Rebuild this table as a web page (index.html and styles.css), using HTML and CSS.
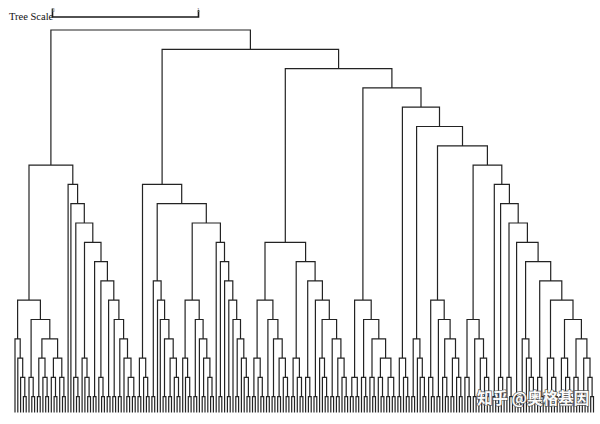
FILE: index.html
```html
<!DOCTYPE html>
<html lang="zh">
<head>
<meta charset="utf-8">
<title>Tree</title>
<link rel="stylesheet" href="styles.css">
</head>
<body>
<div class="figure">
  <svg id="tree" class="tree" width="600" height="424" viewBox="0 0 600 424" xmlns="http://www.w3.org/2000/svg">
    <g class="scale">
      <text class="scale-title" x="9" y="20">Tree Scale</text>
      <path class="scale-bar" d="M52.5 8.5 V17 H198.5 V10"/>
      <text class="scale-tick" x="52" y="11.5">0</text>
      <text class="scale-tick" x="197" y="11.5">1</text>
    </g>
    <g id="branches" class="branches"></g>
    <text class="watermark" x="477" y="404">知乎 @奥格基因</text>
  </svg>
</div>
<script src="script.js"></script>
</body>
</html>
```

FILE: styles.css
```css
html, body {
  margin: 0;
  padding: 0;
  background: #ffffff;
}

.figure {
  width: 600px;
  height: 424px;
  overflow: hidden;
}

.tree {
  display: block;
}

.scale-title {
  font-family: "Liberation Serif", "DejaVu Serif", serif;
  font-size: 10.5px;
  fill: #111;
}

.scale-tick {
  font-family: "Liberation Sans", sans-serif;
  font-size: 5px;
  fill: #777;
}

.scale-bar {
  fill: none;
  stroke: #1a1a1a;
  stroke-width: 1.6;
}

.branch-path {
  fill: none;
  stroke: #232323;
  stroke-width: 1.2;
  stroke-linecap: square;
}

.watermark {
  font-family: "Noto Sans CJK SC", "Noto Sans", sans-serif;
  font-size: 15.5px;
  font-weight: 700;
  fill: #ffffff;
  stroke: #555;
  stroke-width: 1.4px;
  paint-order: stroke;
  opacity: 0.95;
}
```

FILE: script.js
```js
(function () {
  var cat = function (n) { return n <= 1 ? 0 : [0, cat(n - 1)]; };
  var conv = function (it) { return typeof it === 'number' ? cat(it) : it; };
  var lad = function () {
    var items = Array.prototype.slice.call(arguments);
    var node = conv(items[items.length - 1]);
    for (var i = items.length - 2; i >= 0; i--) node = [conv(items[i]), node];
    return node;
  };

  // Clade A
  var A1 = [lad(1, 1, 1, 2), [lad(1, 2), [lad(2, 1, 2), [lad(1, 2), lad(1, 2)]]]];
  var A2 = lad(1, 1, 3, 4, 2, 3, 2, 2, 2, 1, 2, 2);
  var A = [A1, A2];

  // Clade B
  var B1 = lad(2, 1, 2);
  var B2a = lad(2, 1, 1, 2, 2, 1, 2);
  var B2b1 = [lad(1, 1, 2), lad(2, 1, 2, 1, 2)];
  var B2b2 = lad(1, 2, 1, 2, 1, 2, 1, 1, 2);
  var B = [B1, [B2a, [B2b1, B2b2]]];

  // Clade C
  var C1 = [lad(2, 1, 2), lad(2, 2, 2, 1, 2)];
  var C2 = [lad(2, 1, 2), lad(3, 2, 4, 2, 2, 1, 2)];
  var C = [C1, C2];

  // Right ladder
  var D = [[[0, 0], [0, 0]], lad(3, 3, 3, 2, 2)];
  var E = lad(2, 1, 2);
  var F = lad(2, 1, 1, 2);
  var G = lad(3, 2, 3, 2, 1, 2);
  var H = lad(3, 2, 2, 1, 2);
  var I = [0, 0];
  var J = lad(1, 2);
  var K = lad(1, 2);
  var L = [0, 0];
  var M = lad(2, 1, 1, 2);
  var N = lad(1, 2);
  var O = lad(2, 1, 2);
  var P = lad(2, 1, 2);
  var Q = lad(1, 2);
  var R = lad(2, 1, 2);
  var right = lad(D, E, F, G, H, I, J, K, L, M, N, O, P, Q, R);

  var tree = [A, [B, [C, right]]];

  var count = function (n) {
    return Array.isArray(n) ? n.reduce(function (s, k) { return s + count(k); }, 0) : 1;
  };
  var total = count(tree);
  var X0 = 15, X1 = 593.5, S = (X1 - X0) / (total - 1);
  var YB = 412;
  var Y = function (h) { return 396.7 - (h - 1) * 19.3; };
  var idx = 0;
  var f = function (v) { return Math.round(v * 10) / 10; };

  function lay(n) {
    if (!Array.isArray(n)) return { x: X0 + (idx++) * S, h: 0 };
    var ks = n.map(lay);
    var h = 1 + Math.max.apply(null, ks.map(function (k) { return k.h; }));
    return { x: (ks[0].x + ks[ks.length - 1].x) / 2, h: h, ks: ks };
  }

  var d = '';
  function draw(nd) {
    if (!nd.ks) return;
    var y = Y(nd.h);
    d += 'M' + f(nd.ks[0].x) + ' ' + f(y) + 'H' + f(nd.ks[nd.ks.length - 1].x);
    nd.ks.forEach(function (k) {
      d += 'M' + f(k.x) + ' ' + f(y) + 'V' + f(k.ks ? Y(k.h) : YB);
      draw(k);
    });
  }

  var root = lay(tree);
  draw(root);

  var svgNS = 'http://www.w3.org/2000/svg';
  var path = document.createElementNS(svgNS, 'path');
  path.setAttribute('class', 'branch-path');
  path.setAttribute('d', d);
  document.getElementById('branches').appendChild(path);
})();
```
